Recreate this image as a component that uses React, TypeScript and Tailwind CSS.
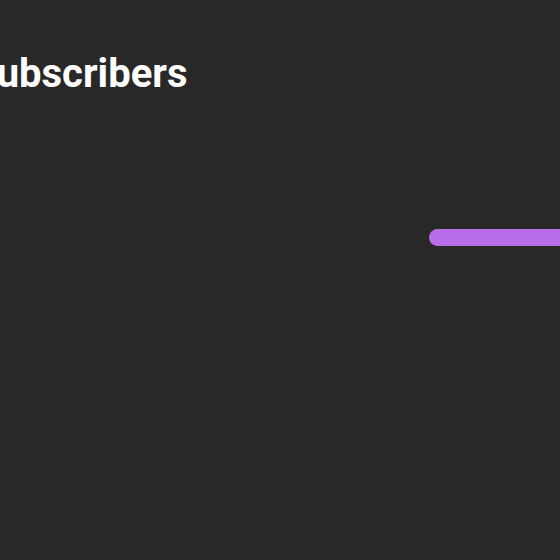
export default function App() {
    return (
        <div className="w-[560px] h-[560px] overflow-hidden bg-[#282828] font-['Roboto',sans-serif]">
            <div className="pt-[50px] -ml-[28px]">
                <h1 className="text-[40px] leading-[48px] font-bold text-white whitespace-nowrap">
                    Subscribers
                </h1>
            </div>
            <div className="flex pt-[131px]">
                <div className="w-[429px] shrink-0"></div>
                <div className="h-[17px] w-[200px] shrink-0 rounded-full bg-[#b86ee8]"></div>
            </div>
        </div>
    );
}
